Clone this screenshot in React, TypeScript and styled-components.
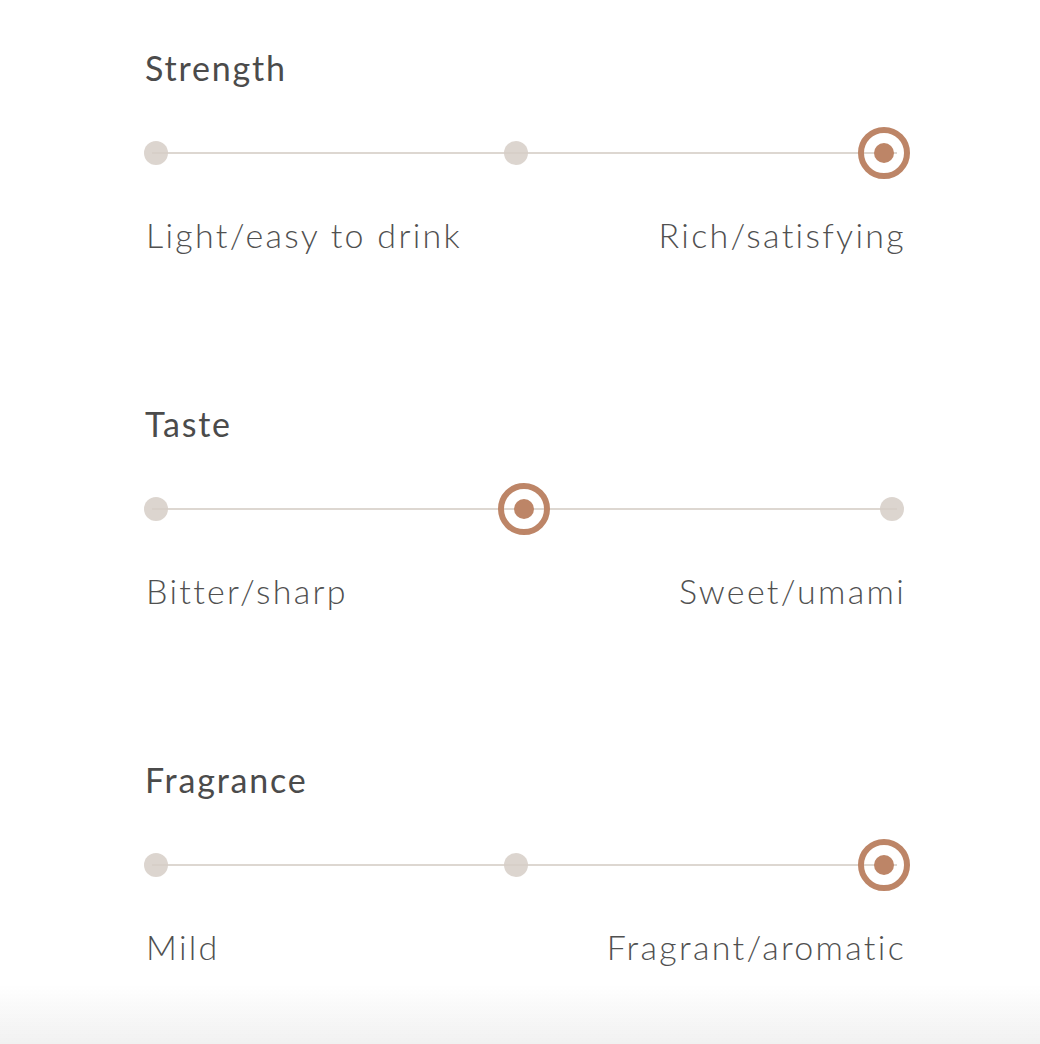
import React from 'react'
import styled, { createGlobalStyle } from 'styled-components'

const GlobalStyle = createGlobalStyle`
  html, body {
    margin: 0;
    padding: 0;
    background: #ffffff;
  }
  body {
    font-family: 'Lato', 'Liberation Sans', sans-serif;
    -webkit-font-smoothing: antialiased;
  }
`

type Scale = {
  title: string
  low: string
  high: string
  // pixel centres of the three stops on the track, and which one is picked
  stops: number[]
  selected: number
}

const scales: Scale[] = [
  { title: 'Strength', low: 'Light/easy to drink', high: 'Rich/satisfying', stops: [12, 372, 739.5], selected: 2 },
  { title: 'Taste', low: 'Bitter/sharp', high: 'Sweet/umami', stops: [12, 379.5, 748], selected: 1 },
  { title: 'Fragrance', low: 'Mild', high: 'Fragrant/aromatic', stops: [12, 372, 739.5], selected: 2 },
]

const App: React.FC = () => {
  return (
    <Page>
      <GlobalStyle />
      {scales.map((s) => (
        <Section key={s.title}>
          <Title>{s.title}</Title>
          <Track>
            <Line />
            {s.stops.map((x, i) =>
              i === s.selected ? (
                <Knob key={i} style={{ left: x }}>
                  <KnobDot />
                </Knob>
              ) : (
                <Stop key={i} style={{ left: x }} />
              )
            )}
          </Track>
          <Labels>
            <Label>{s.low}</Label>
            <Label>{s.high}</Label>
          </Labels>
        </Section>
      ))}
      <BottomFade />
    </Page>
  )
}

const Page = styled.main`
  width: 760px;
  padding: 51px 0 0 144px;
  min-height: 1044px;
`

const Section = styled.section`
  display: flex;
  flex-direction: column;
  margin-bottom: 155px;
`

const Title = styled.h2`
  margin: 0;
  font-size: 34px;
  line-height: 34px;
  font-weight: 400;
  letter-spacing: 1.8px;
  color: #4b4b4b;
  padding-left: 1px;
`

const Track = styled.div`
  position: relative;
  height: 52px;
  margin-top: 42px;
`

const Line = styled.div`
  position: absolute;
  left: 8px;
  right: 7px;
  top: 25px;
  height: 2px;
  background: #ddd7d1;
`

const Stop = styled.div`
  position: absolute;
  top: 14px;
  width: 24px;
  height: 24px;
  margin-left: -12px;
  border-radius: 50%;
  background: rgba(214, 206, 199, 0.85);
`

const Knob = styled.div`
  position: absolute;
  top: 0;
  width: 52px;
  height: 52px;
  margin-left: -26px;
  box-sizing: border-box;
  border: 6px solid #bd8567;
  border-radius: 50%;
  display: flex;
  align-items: center;
  justify-content: center;
`

const KnobDot = styled.div`
  width: 20px;
  height: 20px;
  border-radius: 50%;
  background: #bd8567;
`

const Labels = styled.div`
  display: flex;
  justify-content: space-between;
  margin-top: 39px;
  margin-right: -2px;
`

const Label = styled.span`
  font-size: 34px;
  line-height: 34px;
  font-weight: 300;
  color: #505050;
  letter-spacing: 2.3px;
  padding-left: 2px;
`

const BottomFade = styled.div`
  position: fixed;
  left: 0;
  right: 0;
  bottom: 0;
  height: 60px;
  background: linear-gradient(to bottom, rgba(242, 242, 242, 0), #f1f1f1);
  pointer-events: none;
`

export default App
